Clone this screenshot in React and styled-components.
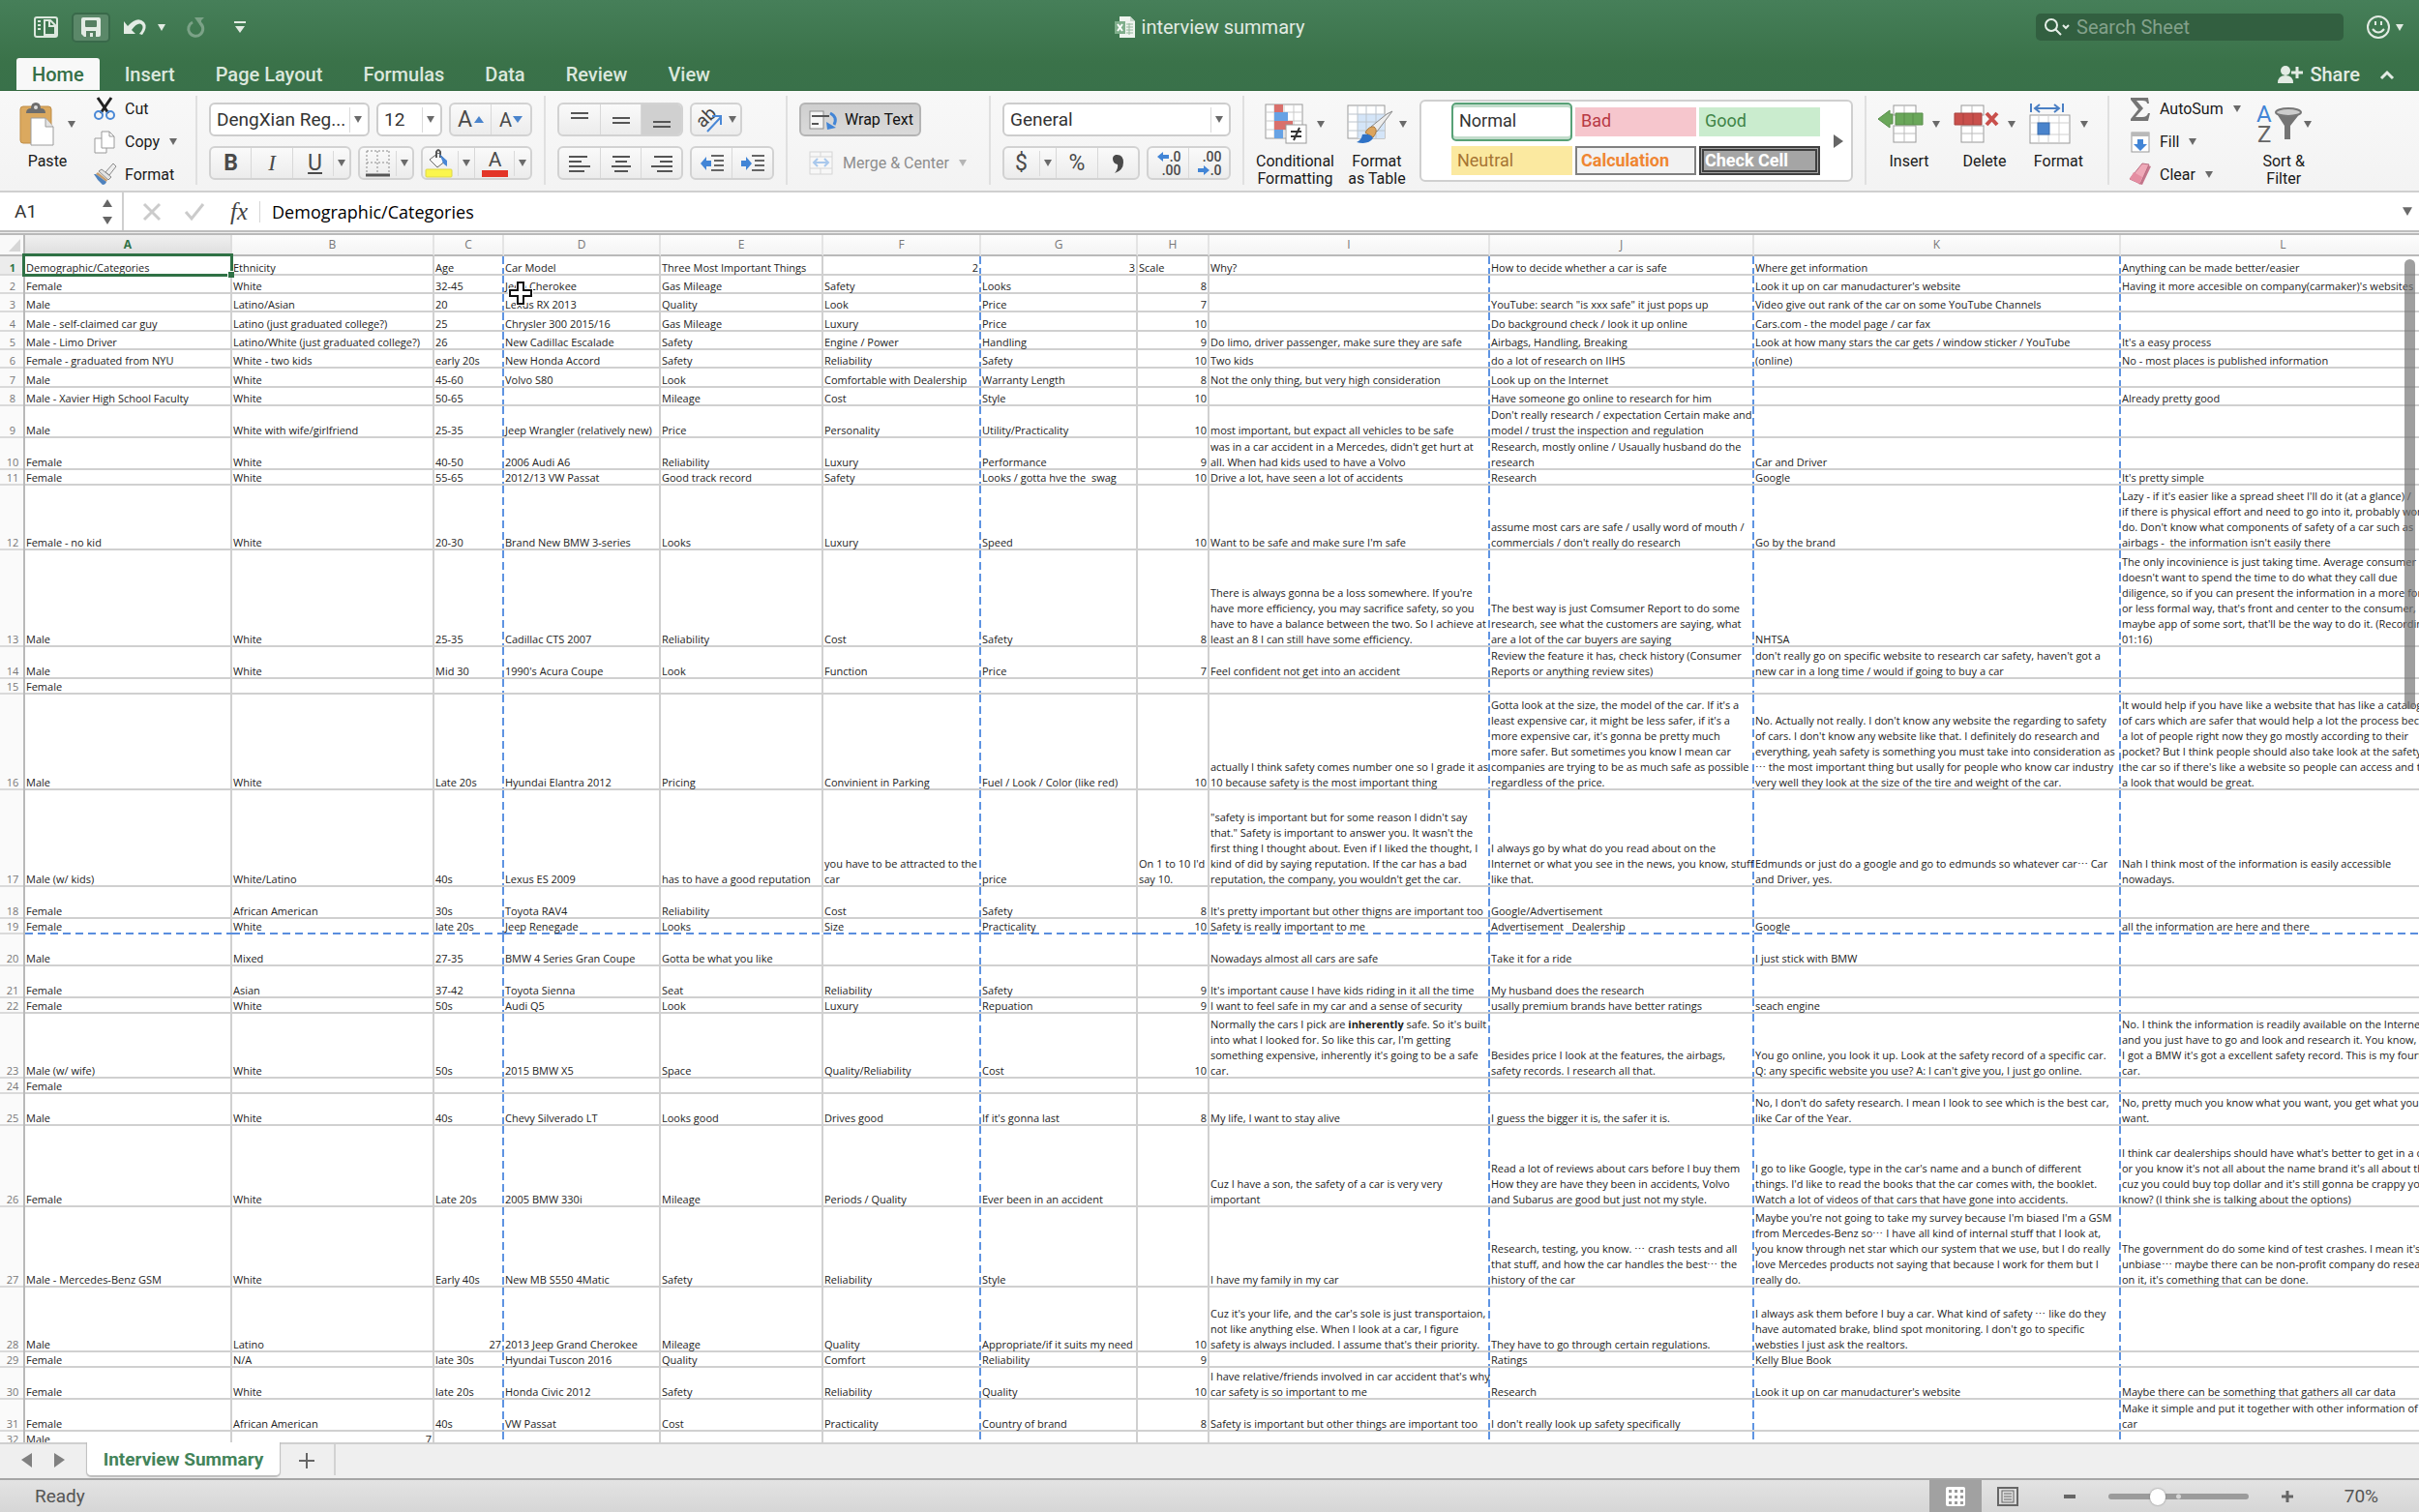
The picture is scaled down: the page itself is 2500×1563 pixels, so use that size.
import React from "react";
import styled, { createGlobalStyle, css } from "styled-components";

const ui = `Roboto, "Liberation Sans", sans-serif`;
const sheetFont = `"Open Sans", "Noto Sans", sans-serif`;

const Global = createGlobalStyle`
  *, *::before, *::after { box-sizing: border-box; }
  body { margin: 0; overflow: hidden; background: #fff; }
  button, input, select { font: inherit; color: inherit; margin: 0; padding: 0; border: 0; background: none; outline: none; }
  svg { display: block; flex: none; overflow: visible; }
`;

const Window = styled.div`
  display: flex;
  flex-direction: column;
  height: 100vh;
  overflow: hidden;
  font-family: ${ui};
  font-size: 16px;
  color: #1a1a1a;
`;

/* ---------- title bar and tabs ---------- */

const Head = styled.header`
  flex: none;
  background: linear-gradient(#467f59, #3a7249 70%, #39714a);
  border-bottom: 1px solid #33683f;
  color: #e3ebe4;
`;
const TitleBar = styled.div`
  display: grid;
  grid-template-columns: 1fr auto 1fr;
  align-items: center;
  height: 60px;
  padding: 0 16px 4px;
`;
const QuickAccess = styled.div`
  display: flex;
  align-items: center;
  gap: 14px;
  padding-left: 19px;
`;
const QuickButton = styled.button`
  display: flex;
  align-items: center;
  gap: 12px;
  ${(p) =>
    p.$boxed &&
    css`
      justify-content: center;
      width: 40px;
      height: 31px;
      border: 2px solid #39694a;
      border-radius: 5px;
      background: #5b8869;
    `}
`;
const Spacer = styled.span`
  width: ${(p) => p.$w}px;
  margin-right: -14px;
`;
const DocTitle = styled.h1`
  display: flex;
  align-items: center;
  gap: 7px;
  margin: 0;
  font-size: 20px;
  font-weight: 400;
  line-height: 24px;
`;
const TitleRight = styled.div`
  display: flex;
  justify-content: flex-end;
  align-items: center;
  gap: 24px;
`;
const Search = styled.label`
  display: flex;
  align-items: center;
  gap: 6px;
  width: 318px;
  height: 28px;
  padding: 0 8px;
  border-radius: 5px;
  background: #325f40;
  input {
    flex: 1;
    min-width: 0;
    font-size: 20px;
  }
  input::placeholder { color: #83a18b; opacity: 1; }
`;
const Smile = styled.button`
  display: flex;
  align-items: center;
  gap: 6px;
`;
const TabRow = styled.div`
  display: flex;
  justify-content: space-between;
  height: 33px;
  padding: 0 25px 0 12px;
`;
const Tabs = styled.nav`
  display: flex;
`;
const Tab = styled.button`
  margin: 0 5px;
  padding: 0 16px;
  border-radius: 3px 3px 0 0;
  font-size: 20px;
  font-weight: 500;
  color: ${(p) => (p.$active ? "#356f47" : "#dbe7dd")};
  background: ${(p) => (p.$active ? "#f8f8f8" : "none")};
`;
const Share = styled.div`
  display: flex;
  align-items: center;
  gap: 20px;
  font-size: 20px;
  font-weight: 500;
  button {
    display: flex;
    align-items: center;
    gap: 7px;
  }
`;

/* ---------- ribbon ---------- */

const Ribbon = styled.section`
  flex: none;
  display: flex;
  height: 105px;
  border-bottom: 2px solid #cfcfcf;
  background: linear-gradient(#f8f8f8, #f3f3f3);
`;
const Group = styled.div`
  display: flex;
  gap: ${(p) => p.$gap || 0}px;
  padding: 12px 12px 0;
  width: ${(p) => (p.$w ? p.$w + "px" : "auto")};
  flex: none;
`;
const Rule = styled.div`
  flex: none;
  width: 2px;
  height: 92px;
  margin-top: 5px;
  background: #e0e0e0;
`;
const Rows = styled.div`
  display: flex;
  flex-direction: column;
  gap: 10px;
`;
const Row = styled.div`
  display: flex;
  gap: 7px;
`;
const ButtonSet = styled.div`
  display: flex;
  height: 35px;
  border: 2px solid #d2d2d2;
  border-radius: 6px;
  background: linear-gradient(#fafafa, #ececec);
  overflow: hidden;
`;
const Tool = styled.button`
  display: flex;
  align-items: center;
  justify-content: center;
  gap: ${(p) => p.$gap || 0}px;
  width: ${(p) => p.$w}px;
  color: #4a4a4a;
  font-size: 23px;
  line-height: 28px;
  background: ${(p) => (p.$on ? "#d0d0d0" : "none")};
  & + & { border-left: 1px solid #d8d8d8; }
`;
const Combo = styled.label`
  display: flex;
  align-items: center;
  width: ${(p) => p.$w}px;
  height: 35px;
  padding: 0 6px;
  border: 2px solid #cdcdcd;
  border-radius: 6px;
  background: #fff;
  select {
    flex: 1;
    min-width: 0;
    appearance: none;
    font-size: 19px;
    color: #333;
  }
`;
const Split = styled.i`
  width: 1px;
  height: 26px;
  margin: 0 4px 0 ${(p) => p.$before || 0}px;
  background: #dadada;
`;
const DropFace = styled.span`
  display: flex;
  flex: 1;
  align-items: center;
  justify-content: flex-end;
  padding-right: 4px;
`;
const WrapButton = styled.button`
  display: flex;
  align-items: center;
  gap: ${(p) => p.$gap || 7}px;
  width: ${(p) => p.$w}px;
  height: 35px;
  padding-left: 8px;
  border: 2px solid ${(p) => (p.$on ? "#b4b4b4" : "transparent")};
  border-radius: 6px;
  white-space: nowrap;
  background: ${(p) => (p.$on ? "linear-gradient(#cfcfcf, #dadada)" : "none")};
  color: ${(p) => (p.$on ? "#111" : "#8d8d8d")};
`;
const Big = styled.button`
  display: flex;
  flex-direction: column;
  align-items: center;
  gap: 8px;
  height: 88px;
  line-height: 18px;
  color: #1a1a1a;
`;
const BigIcon = styled.span`
  display: flex;
  align-items: center;
  gap: ${(p) => p.$gap || 10}px;
  height: 44px;
`;
const PasteWrap = styled.div`
  padding-left: 8px;
`;
const SmallStack = styled.div`
  display: flex;
  flex-direction: column;
  margin-top: -10px;
`;
const EditStack = styled(SmallStack)`
  padding-left: 10px;
`;
const Small = styled.button`
  display: flex;
  align-items: center;
  gap: 10px;
  height: 34px;
  color: #1a1a1a;
`;
const Gallery = styled.div`
  display: flex;
  width: 448px;
  height: 85px;
  margin-top: -3px;
  border: 2px solid #cfcfcf;
  border-radius: 6px;
  background: #fff;
`;
const Swatches = styled.div`
  display: grid;
  grid-template-columns: repeat(3, 125px);
  grid-template-rows: 39px 30px;
  gap: 6px 3px;
  align-items: center;
  align-content: start;
  padding: 1px 0 0 31px;
`;
const Swatch = styled.button`
  height: 30px;
  padding: 0 0 1px 6px;
  text-align: left;
  font-size: 18px;
  line-height: 26px;
  ${(p) => p.$css}
`;
const More = styled.button`
  display: flex;
  align-items: center;
  padding: 0 0 0 14px;
`;
const SmallA = styled.span`
  font-size: 20px;
`;
const Italic = styled.i`
  font-family: "Liberation Serif", serif;
`;

/* ---------- formula bar ---------- */

const FormulaBar = styled.div`
  flex: none;
  display: flex;
  align-items: center;
  height: 39px;
  background: #fff;
`;
const NameBox = styled.label`
  display: flex;
  align-items: center;
  width: 128px;
  height: 39px;
  padding: 0 10px 0 15px;
  border-right: 2px solid #cfcfcf;
  input {
    flex: 1;
    min-width: 0;
    font-size: 19px;
    color: #333;
  }
`;
const FxButtons = styled.div`
  display: flex;
  align-items: center;
  gap: 24px;
  height: 22px;
  padding: 0 12px 0 20px;
  border-right: 1px solid #d6d6d6;
`;
const FxLabel = styled.i`
  padding-left: 2px;
  font-family: "Liberation Serif", serif;
  font-size: 25px;
  line-height: 22px;
  color: #444;
`;
const FormulaInput = styled.input`
  flex: 1;
  min-width: 0;
  padding-left: 12px;
  font-family: ${sheetFont};
  font-size: 18px;
  line-height: 26px;
  color: #000;
`;
const ExpandButton = styled.button`
  padding: 0 7px;
`;
const BarEdge = styled.div`
  flex: none;
  height: 5px;
  border-top: 2px solid #bdbdbd;
  border-bottom: 2px solid #b9b9b9;
  background: #eee;
`;

/* ---------- sheet ---------- */

const Sheet = styled.main`
  position: relative;
  flex: 1;
  min-height: 0;
  overflow: hidden;
  background: #fff;
`;
const Grid = styled.table`
  table-layout: fixed;
  width: 2529px;
  border-collapse: separate;
  border-spacing: 0;
  font-family: ${sheetFont};
  font-size: 11px;
  line-height: 16px;
  color: #222;
  th, td { padding: 0; }
`;
const line = "#d0d0d0";
const ColHead = styled.th`
  height: 22px;
  font-size: 12px;
  line-height: 20px;
  font-weight: ${(p) => (p.$on ? 700 : 400)};
  color: ${(p) => (p.$on ? "#2f7145" : "#777")};
  background: linear-gradient(${(p) => (p.$on ? "#f0f0f0, #dedede" : "#fdfdfd, #f4f4f4")});
  border-right: 2px solid ${(p) => (p.$on ? "#dedede" : "#e4e4e4")};
  border-bottom: 2px solid #b9b9b9;
`;
const Corner = styled.th`
  height: 22px;
  background: #f9f9f9;
  border-right: 2px solid #b9b9b9;
  border-bottom: 2px solid #b9b9b9;
  svg { margin-left: 9px; }
`;
const RowHead = styled.th`
  vertical-align: bottom;
  font-weight: ${(p) => (p.$on ? 700 : 400)};
  color: ${(p) => (p.$on ? "#2f7145" : "#777")};
  background:
    linear-gradient(#b9b9b9, #b9b9b9) 100% 0 / 2px 100% no-repeat,
    linear-gradient(#dadada, #dadada) 0 100% / 100% 2px no-repeat,
    ${(p) => (p.$on ? "#ececec" : "#fafafa")};
`;
const blueV = "repeating-linear-gradient(#5f94e2 0 8px, #fff 8px 12px)";
const blueH = "repeating-linear-gradient(90deg, #5a8ede 0 8px, #fff 8px 13px)";
const Cell = styled.td`
  position: ${(p) => (p.$selected ? "relative" : "static")};
  vertical-align: bottom;
  text-align: ${(p) => (p.$num ? "right" : "left")};
  background:
    ${(p) => (p.$breakBelow ? blueH : `linear-gradient(${line}, ${line})`)} 0 100% / 100% 2px no-repeat,
    ${(p) => (p.$break ? blueV : `linear-gradient(${line}, ${line})`)} 100% 0 / 2px 100% no-repeat;
`;
const Text = styled.div`
  white-space: pre;
  padding: 0 3px 0 1px;
`;
const Selection = styled.div`
  position: absolute;
  inset: -3px -1px -1px -3px;
  border: 3px solid #2f7145;
  &::after {
    content: "";
    position: absolute;
    right: -4px;
    bottom: -4px;
    width: 7px;
    height: 7px;
    border: solid #fff;
    border-width: 1px 0 0 1px;
    background: #2f7145;
  }
`;
const ScrollThumb = styled.div`
  position: absolute;
  top: 25px;
  right: 4px;
  width: 11px;
  height: 465px;
  border-radius: 6px;
  background: rgba(118, 118, 118, 0.7);
`;
const Pointer = styled.div`
  position: absolute;
  left: 525px;
  top: 46px;
`;

/* ---------- bottom ---------- */

const SheetBar = styled.div`
  flex: none;
  display: flex;
  height: 39px;
  padding-left: 22px;
  border-bottom: 2px solid #a5a5a5;
  background: #efefef;
  box-shadow: inset 0 2px 0 #cfcfcf;
`;
const Arrows = styled.div`
  display: flex;
  align-items: center;
  gap: 23px;
  width: 68px;
`;
const SheetTab = styled.button`
  width: 199px;
  height: 34px;
  border-radius: 0 0 4px 4px;
  background: #fff;
  box-shadow: 0 1px 1px 1px #bdbdbd;
  clip-path: inset(0 -3px -3px -3px);
  font-size: 19px;
  font-weight: 700;
  color: #43845a;
`;
const AddSheet = styled.button`
  display: flex;
  align-items: center;
  justify-content: center;
  width: 58px;
  height: 32px;
  margin-top: 2px;
  padding-top: 2px;
  border-right: 2px solid #d2d2d2;
`;
const Status = styled.footer`
  flex: none;
  display: flex;
  align-items: center;
  height: 33px;
  padding: 0 42px 0 36px;
  background: linear-gradient(#e3e3e3, #d6d6d6);
  color: #555;
  font-size: 19px;
`;
const ReadyText = styled.span`
  flex: 1;
`;
const ViewButton = styled.button`
  display: flex;
  align-items: center;
  justify-content: center;
  width: 54px;
  height: 33px;
  background: ${(p) => (p.$on ? "#a1a1a1" : "none")};
`;
const ZoomBar = styled.div`
  display: flex;
  align-items: center;
  gap: 34px;
  margin-left: 31px;
`;
const Slider = styled.input`
  appearance: none;
  display: block;
  width: 145px;
  height: 18px;
  &::-webkit-slider-runnable-track {
    height: 6px;
    border-radius: 3px;
    background: radial-gradient(circle at 50% 50%, #d6d6d6 0 2px, #9b9b9b 3px);
  }
  &::-webkit-slider-thumb {
    appearance: none;
    width: 16px;
    height: 17px;
    margin-top: -5px;
    border-radius: 8px;
    background: #fff;
    box-shadow: 0 0 2px #777;
  }
`;
const Percent = styled.output`
  margin-left: 19px;
`;

/* ---------- icons ---------- */

const Down = ({ c = "#6a6a6a", w = 8 }) => (
  <svg width={w} height={w - 1} viewBox="0 0 8 7"><path d="M0 0h8L4 7z" fill={c} /></svg>
);
const Svg = ({ w, h, children, ...rest }) => (
  <svg width={w} height={h} viewBox={`0 0 ${w} ${h}`} fill="none" {...rest}>{children}</svg>
);
const Lines = ({ d }) => (
  <Svg w={24} h={18} stroke="#555" strokeWidth="2"><path d={d} /></Svg>
);
const PaneIcon = () => (
  <Svg w={25} h={22}>
    <rect x="1" y="1" width="23" height="20" rx="2" stroke="#dce8de" strokeWidth="2" />
    <path d="M4 5h3M4 9h3M4 13h3" stroke="#dce8de" strokeWidth="2" />
    <path d="M11 4h6l5 5v10H11z" fill="#3f7650" stroke="#dce8de" strokeWidth="2" />
    <path d="M16 4v6h6" stroke="#dce8de" strokeWidth="2" />
  </Svg>
);
const SaveIcon = () => (
  <Svg w={22} h={22}>
    <path d="M1 3q0-2 2-2h16q2 0 2 2v16q0 2-2 2H4l-3-3z" fill="#e3ebe4" />
    <rect x="5" y="4" width="12" height="7" rx="1" fill="#567f62" />
    <path d="M6 21v-6h10v6h-3v-4h-3v4z" fill="#567f62" />
  </Svg>
);
const UndoIcon = () => (
  <Svg w={23} h={17}>
    <path d="M0 2v13h12L8 11q6-8 10-6 4 3-2 10l3 1q6-8 2-13-7-7-17 4z" fill="#e3ebe4" />
  </Svg>
);
const RedoIcon = () => (
  <Svg w={19} h={20}>
    <path d="M6 5a7.500 7.500 0 1 0 8 1" stroke="#7ba287" strokeWidth="3" />
    <path d="M8 0h10l-3 3v7z" fill="#7ba287" />
  </Svg>
);
const CustomizeIcon = () => (
  <Svg w={12} h={12}><path d="M0 0h12v2H0zM1 5h10l-5 7z" fill="#e3ebe4" /></Svg>
);
const DocIcon = () => (
  <Svg w={21} h={22}>
    <path d="M5 0h11l5 5v17H5z" fill="#eef3ee" />
    <path d="M16 0v5h5" fill="#c7d6ca" />
    <path d="M12 8h7M12 11h7M12 14h7M12 17h7M15 7v12" stroke="#94b89c" />
    <rect y="5" width="11" height="13" fill="#7fae8b" />
    <path d="M3 8l5 7M8 8l-5 7" stroke="#fff" strokeWidth="2" />
  </Svg>
);
const SearchIcon = () => (
  <Svg w={28} h={20} stroke="#e6efe8" strokeWidth="2">
    <circle cx="8" cy="8" r="6" /><path d="M12 12l6 6M20 8l3 3 3-3" />
  </Svg>
);
const SmileIcon = () => (
  <Svg w={24} h={24} stroke="#e3ebe4" strokeWidth="2">
    <circle cx="12" cy="12" r="11" /><path d="M6 14q6 7 12 0M9 6v4M15 6v4" />
  </Svg>
);
const ShareIcon = () => (
  <Svg w={26} h={20}>
    <circle cx="8" cy="6" r="5" fill="#e3ebe4" />
    <path d="M0 19q0-8 8-8t8 8z" fill="#e3ebe4" />
    <path d="M20 2v12M14 8h12" stroke="#e3ebe4" strokeWidth="3" />
  </Svg>
);
const PasteIcon = () => (
  <Svg w={36} h={44}>
    <rect x="1" y="4" width="32" height="38" rx="3" fill="#dba95f" stroke="#bf8d47" />
    <path d="M7 11q0-5 5-5 0-6 5-6t5 6q5 0 5 5z" fill="#6d6d6d" />
    <circle cx="17" cy="5" r="2" fill="#ddd" />
    <path d="M12 16h15l8 9v19H12z" fill="#fff" stroke="#9c9c9c" />
    <path d="M27 16v9h8" fill="#e3e3e3" stroke="#9c9c9c" />
  </Svg>
);
const CutIcon = () => (
  <Svg w={22} h={25}>
    <path d="M4 1l11 16M18 1L7 17" stroke="#222" strokeWidth="3" />
    <circle cx="5" cy="19" r="4" stroke="#4a88d6" strokeWidth="2" />
    <circle cx="17" cy="19" r="4" stroke="#4a88d6" strokeWidth="2" />
  </Svg>
);
const CopyIcon = () => (
  <Svg w={22} h={24}>
    <path d="M1 8h8l4 4v11H1z" fill="#fff" stroke="#9a9a9a" />
    <path d="M8 1h8l5 5v12H8z" fill="#fff" stroke="#9a9a9a" />
    <path d="M16 1v5h5" stroke="#9a9a9a" />
  </Svg>
);
const BrushIcon = () => (
  <Svg w={22} h={22}>
    <path d="M20 0l3 3-7 9-4-3z" fill="#eee" stroke="#8a8a8a" />
    <path d="M8 6l10 8-3 3L5 8z" fill="#e4e4e4" stroke="#8a8a8a" />
    <path d="M4 9l10 8-1 2L2 11z" fill="#c79d6c" />
    <path d="M2 11l11 8q-1 3-4 3Q4 18 0 11z" fill="#4f82bd" />
  </Svg>
);
const BorderIcon = () => (
  <Svg w={25} h={28} stroke="#8a8a8a" strokeDasharray="2 2">
    <path d="M1 1h23M1 13h23M1 1v23M12 1v23M24 1v23" />
    <path d="M0 26h25" stroke="#555" strokeWidth="3" strokeDasharray="none" />
  </Svg>
);
const FillIcon = () => (
  <Svg w={27} h={29}>
    <path d="M4 11l9-7 8 8-9 7z" fill="#fafafa" stroke="#666" />
    <path d="M11 9V3q2-4 4 0v6" stroke="#555" strokeWidth="2" />
    <path d="M14 5l8 7v6q-5-3-5-6z" fill="#4a88d6" />
    <rect y="21" width="27" height="8" rx="1" fill="#fbf64b" stroke="#dcd64a" />
  </Svg>
);
const ColorBox = styled.span`
  display: flex;
  flex-direction: column;
  align-items: center;
  width: 27px;
  font-size: 21px;
  line-height: 20px;
  &::after {
    content: "";
    width: 27px;
    height: 7px;
    margin-top: 1px;
    background: #e33528;
  }
`;
const OrientIcon = () => (
  <Svg w={28} h={28}>
    <text x="2" y="20" transform="rotate(-45 8 16)" fontFamily="Roboto" fontSize="19" fill="#444">ab</text>
    <path d="M11 26L25 11M25 19v-9h-9" stroke="#4a88d6" strokeWidth="2" />
  </Svg>
);
const IndentIcon = ({ right }) => (
  <Svg w={26} h={18}>
    <path d="M12 1h13M15 6h10M15 11h10M12 16h13" stroke="#666" strokeWidth="2" />
    {right
      ? <path d="M12 9L6 2v4H1v6h5v4z" fill="#4285d6" />
      : <path d="M1 9l6-7v4h5v6H7v4z" fill="#4285d6" />}
  </Svg>
);
const WrapIcon = () => (
  <Svg w={30} h={22}>
    <rect x="1" y="2" width="14" height="18" fill="#f6f6f6" stroke="#8b8b8b" />
    <path d="M3 7h18M3 15h7" stroke="#555" strokeWidth="2" />
    <path d="M22 4q8 4 4 12" stroke="#4285d6" strokeWidth="3" />
    <path d="M18 13l1 8 9-2z" fill="#4285d6" />
  </Svg>
);
const MergeIcon = () => (
  <Svg w={25} h={25}>
    <rect x="1" y="1" width="23" height="23" fill="#f7f7f7" stroke="#d5d5d5" />
    <path d="M1 6h23M1 18h23M12 1v5M12 18v6" stroke="#d5d5d5" />
    <path d="M5 12h15M9 8l-4 4 4 4M16 8l4 4-4 4" stroke="#a9c8ec" strokeWidth="2" />
  </Svg>
);
const DecText = styled.span`
  display: grid;
  justify-items: end;
  width: 26px;
  font-size: 14px;
  font-weight: 500;
  line-height: 14px;
  span { display: flex; align-items: center; gap: 1px; }
`;
const LeftArrow = () => (
  <Svg w={12} h={9}><path d="M0 5l6-5v3h6v4H6v3z" fill="#4285d6" /></Svg>
);
const RightArrow = () => (
  <Svg w={12} h={9}><path d="M12 5L6 0v3H0v4h6v3z" fill="#4285d6" /></Svg>
);
const CondIcon = () => (
  <Svg w={44} h={42}>
    <rect x="1" y="1" width="38" height="35" fill="#fff" stroke="#9a9a9a" />
    <path d="M10 1v35M20 1v35M30 1v35M1 9h38M1 18h38M1 27h38" stroke="#c9c9c9" />
    <path d="M10 1h9v8h-9zM10 18h19v9H10z" fill="#d9706c" />
    <path d="M10 9h14v9H10zM10 27h9v9h-9z" fill="#67a2e4" />
    <rect x="22" y="22" width="21" height="19" fill="#fff" stroke="#9a9a9a" />
    <path d="M27 29h11M27 34h11M36 25l-6 13" stroke="#333" strokeWidth="2" />
  </Svg>
);
const TableIcon = () => (
  <Svg w={48} h={42}>
    <rect x="1" y="2" width="38" height="34" fill="#fff" stroke="#9a9a9a" />
    <path d="M11 11h28v25H11z" fill="#d4e5f8" />
    <path d="M11 2v34M20 2v34M30 2v34M1 11h38M1 19h38M1 28h38" stroke="#bcc4cc" />
    <path d="M47 8L31 29l-6-5L41 11z" fill="#ececec" stroke="#888" />
    <path d="M19 30q4-7 9-6 5 4-1 11z" fill="#dca45c" stroke="#a9783c" />
    <path d="M10 40q5-2 6-8 9-1 11 4-5 7-17 4z" fill="#2f72c6" />
  </Svg>
);
const CellsBase = () => (
  <>
    <rect x="16" y="1" width="23" height="10" fill="#fff" stroke="#999" />
    <rect x="16" y="22" width="23" height="17" fill="#fff" stroke="#999" />
    <path d="M27 1v10M27 22v17M16 30h23" stroke="#bbb" />
  </>
);
const InsertIcon = () => (
  <Svg w={46} h={40}>
    <CellsBase />
    <path d="M18 9h28v12H18z" fill="#6aa75a" stroke="#5a8e4c" />
    <path d="M27 9v12M36 9v12" stroke="#5a8e4c" />
    <path d="M0 15L12 6v4h3v10h-3v4z" fill="#6aa75a" stroke="#5a8e4c" />
  </Svg>
);
const DeleteIcon = () => (
  <Svg w={46} h={40}>
    <g transform="translate(-8 0)"><CellsBase /></g>
    <path d="M1 9h28v12H1z" fill="#c9504c" stroke="#a8423f" />
    <path d="M10 9v12M20 9v12" stroke="#a8423f" />
    <path d="M34 9l11 12M45 9L34 21" stroke="#c9504c" strokeWidth="4" />
  </Svg>
);
const FormatIcon = () => (
  <Svg w={43} h={42}>
    <path d="M2 0v9M35 0v9M7 5h23M11 1L6 5l5 4M26 1l5 4-5 4" stroke="#4a7fc4" strokeWidth="2" />
    <rect x="1" y="12" width="41" height="29" fill="#fff" stroke="#999" />
    <path d="M10 12v29M20 12v29M31 12v29M1 20h41M1 32h41" stroke="#cfcfcf" />
    <rect x="9" y="20" width="12" height="12" fill="#4a84cc" stroke="#3b6fb0" />
  </Svg>
);
const SigmaIcon = () => (
  <Svg w={20} h={24}>
    <path d="M0 0h18l1 6h-2q0-3-5-3H6l7 8-8 9h7q5 0 6-4h2l-2 8H0v-2l8-10L0 2z" fill="#757575" />
  </Svg>
);
const FillDownIcon = () => (
  <Svg w={20} h={22}>
    <rect x="1" y="1" width="18" height="20" fill="#fff" stroke="#999" />
    <path d="M1 1h18v4H1z" fill="#b9b9b9" />
    <path d="M7 8h6v5h4l-7 7-7-7h4z" fill="#4285d6" />
  </Svg>
);
const EraserIcon = () => (
  <Svg w={20} h={24}>
    <path d="M12 1l9 3-9 19-4-1z" fill="#c5768c" />
    <path d="M12 1l7 1-9 20-11-5z" fill="#efa9b8" stroke="#b96e82" />
    <path d="M-1 17l10 5 3-7-9-5z" fill="#e58ea2" />
  </Svg>
);
const SortIcon = () => (
  <Svg w={47} h={40}>
    <text x="0" y="18" fontFamily="Roboto" fontSize="24" fill="#4285d6">A</text>
    <text x="1" y="39" fontFamily="Roboto" fontSize="24" fill="#666">Z</text>
    <path d="M20 8q13 7 26 0L35 22v14h-6V22z" fill="#747474" />
    <ellipse cx="33" cy="8" rx="13" ry="4" fill="#ccc" stroke="#777" strokeWidth="2" />
  </Svg>
);

/* ---------- sheet data ---------- */

const columns = [
  ["A", 214], ["B", 209], ["C", 72, true], ["D", 162], ["E", 168], ["F", 163, true],
  ["G", 162], ["H", 74], ["I", 290, true], ["J", 273, true], ["K", 379, true], ["L", 337],
];

const inherently = (
  <>Normally the cars I pick are <b>inherently</b>{" safe. So it's built\ninto what I looked for. So like this car, I'm getting\nsomething expensive, inherently it's going to be a safe\ncar."}</>
);

const rows = [
  [20, "Demographic/Categories", "Ethnicity", "Age", "Car Model", "Three Most Important Things", 2, 3, "Scale", "Why?", "How to decide whether a car is safe", "Where get information", "Anything can be made better/easier"],
  [19, "Female", "White", "32-45", "Jeep Cherokee", "Gas Mileage", "Safety", "Looks", 8, "", "", "Look it up on car manudacturer's website", "Having it more accesible on company(carmaker)'s websites"],
  [19, "Male", "Latino/Asian", "20", "Lexus RX 2013", "Quality", "Look", "Price", 7, "", "YouTube: search \"is xxx safe\" it just pops up", "Video give out rank of the car on some YouTube Channels", ""],
  [20, "Male - self-claimed car guy", "Latino (just graduated college?)", "25", "Chrysler 300 2015/16", "Gas Mileage", "Luxury", "Price", 10, "", "Do background check / look it up online", "Cars.com - the model page / car fax", ""],
  [19, "Male - Limo Driver", "Latino/White (just graduated college?)", "26", "New Cadillac Escalade", "Safety", "Engine / Power", "Handling", 9, "Do limo, driver passenger, make sure they are safe", "Airbags, Handling, Breaking", "Look at how many stars the car gets / window sticker / YouTube", "It's a easy process"],
  [19, "Female - graduated from NYU", "White - two kids", "early 20s", "New Honda Accord", "Safety", "Reliability", "Safety", 10, "Two kids", "do a lot of research on IIHS", "(online)", "No - most places is published information"],
  [20, "Male", "White", "45-60", "Volvo S80", "Look", "Comfortable with Dealership", "Warranty Length", 8, "Not the only thing, but very high consideration", "Look up on the Internet", "", ""],
  [19, "Male - Xavier High School Faculty", "White", "50-65", "", "Mileage", "Cost", "Style", 10, "", "Have someone go online to research for him", "", "Already pretty good"],
  [33, "Male", "White with wife/girlfriend", "25-35", "Jeep Wrangler (relatively new)", "Price", "Personality", "Utility/Practicality", 10, "most important, but expact all vehicles to be safe", "Don't really research / expectation Certain make and\nmodel / trust the inspection and regulation", "", ""],
  [33, "Female", "White", "40-50", "2006 Audi A6", "Reliability", "Luxury", "Performance", 9, "was in a car accident in a Mercedes, didn't get hurt at\nall. When had kids used to have a Volvo", "Research, mostly online / Usaually husband do the\nresearch", "Car and Driver", ""],
  [16, "Female", "White", "55-65", "2012/13 VW Passat", "Good track record", "Safety", "Looks / gotta hve the  swag", 10, "Drive a lot, have seen a lot of accidents", "Research", "Google", "It's pretty simple"],
  [67, "Female - no kid", "White", "20-30", "Brand New BMW 3-series", "Looks", "Luxury", "Speed", 10, "Want to be safe and make sure I'm safe", "assume most cars are safe / usally word of mouth /\ncommercials / don't really do research", "Go by the brand", "Lazy - if it's easier like a spread sheet I'll do it (at a glance) /\nif there is physical effort and need to go into it, probably won't\ndo. Don't know what components of safety of a car such as\nairbags -  the information isn't easily there"],
  [100, "Male", "White", "25-35", "Cadillac CTS 2007", "Reliability", "Cost", "Safety", 8, "There is always gonna be a loss somewhere. If you're\nhave more efficiency, you may sacrifice safety, so you\nhave to have a balance between the two. So I achieve at\nleast an 8 I can still have some efficiency.", "The best way is just Comsumer Report to do some\nresearch, see what the customers are saying, what\nare a lot of the car buyers are saying", "NHTSA", "The only incovinience is just taking time. Average consumer\ndoesn't want to spend the time to do what they call due\ndiligence, so if you can present the information in a more formal\nor less formal way, that's front and center to the consumer,\nmaybe app of some sort, that'll be the way to do it. (Recording\n01:16)"],
  [33, "Male", "White", "Mid 30", "1990's Acura Coupe", "Look", "Function", "Price", 7, "Feel confident not get into an accident", "Review the feature it has, check history (Consumer\nReports or anything review sites)", "don't really go on specific website to research car safety, haven't got a\nnew car in a long time / would if going to buy a car", ""],
  [16, "Female", "", "", "", "", "", "", "", "", "", "", ""],
  [99, "Male", "White", "Late 20s", "Hyundai Elantra 2012", "Pricing", "Convinient in Parking", "Fuel / Look / Color (like red)", 10, "actually I think safety comes number one so I grade it as\n10 because safety is the most important thing", "Gotta look at the size, the model of the car. If it's a\nleast expensive car, it might be less safer, if it's a\nmore expensive car, it's gonna be pretty much\nmore safer. But sometimes you know I mean car\ncompanies are trying to be as much safe as possible\nregardless of the price.", "No. Actually not really. I don't know any website the regarding to safety\nof cars. I don't know any website like that. I definitely do research and\neverything, yeah safety is something you must take into consideration as\n⋯ the most important thing but usally for people who know car industry\nvery well they look at the size of the tire and weight of the car.", "It would help if you have like a website that has like a catalog\nof cars which are safer that would help a lot the process because\na lot of people right now they go mostly according to their\npocket? But I think people should also take look at the safety of\nthe car so if there's like a website so people can access and take\na look that would be great."],
  [100, "Male (w/ kids)", "White/Latino", "40s", "Lexus ES 2009", "has to have a good reputation", "you have to be attracted to the\ncar", "price", "On 1 to 10 I'd\nsay 10.", "\"safety is important but for some reason I didn't say\nthat.\" Safety is important to answer you. It wasn't the\nfirst thing I thought about. Even if I liked the thought, I\nkind of did by saying reputation. If the car has a bad\nreputation, the company, you wouldn't get the car.", "I always go by what do you read about on the\nInternet or what you see in the news, you know, stuff\nlike that.", "Edmunds or just do a google and go to edmunds so whatever car⋯ Car\nand Driver, yes.", "Nah I think most of the information is easily accessible\nnowadays."],
  [33, "Female", "African American", "30s", "Toyota RAV4", "Reliability", "Cost", "Safety", 8, "It's pretty important but other thigns are important too", "Google/Advertisement", "", ""],
  [16, "Female", "White", "late 20s", "Jeep Renegade", "Looks", "Size", "Practicality", 10, "Safety is really important to me", "Advertisement   Dealership", "Google", "all the information are here and there"],
  [33, "Male", "Mixed", "27-35", "BMW 4 Series Gran Coupe", "Gotta be what you like", "", "", "", "Nowadays almost all cars are safe", "Take it for a ride", "I just stick with BMW", ""],
  [33, "Female", "Asian", "37-42", "Toyota Sienna", "Seat", "Reliability", "Safety", 9, "It's important cause I have kids riding in it all the time", "My husband does the research", "", ""],
  [16, "Female", "White", "50s", "Audi Q5", "Look", "Luxury", "Repuation", 9, "I want to feel safe in my car and a sense of security", "usally premium brands have better ratings", "seach engine", ""],
  [67, "Male (w/ wife)", "White", "50s", "2015 BMW X5", "Space", "Quality/Reliability", "Cost", 10, inherently, "Besides price I look at the features, the airbags,\nsafety records. I research all that.", "You go online, you look it up. Look at the safety record of a specific car.\nQ: any specific website you use? A: I can't give you, I just go online.", "No. I think the information is readily available on the Internet\nand you just have to go and look and research it. You know,\nI got a BMW it's got a excellent safety record. This is my fourth\ncar."],
  [16, "Female", "", "", "", "", "", "", "", "", "", "", ""],
  [33, "Male", "White", "40s", "Chevy Silverado LT", "Looks good", "Drives good", "If it's gonna last", 8, "My life, I want to stay alive", "I guess the bigger it is, the safer it is.", "No, I don't do safety research. I mean I look to see which is the best car,\nlike Car of the Year.", "No, pretty much you know what you want, you get what you\nwant."],
  [84, "Female", "White", "Late 20s", "2005 BMW 330i", "Mileage", "Periods / Quality", "Ever been in an accident", "", "Cuz I have a son, the safety of a car is very very\nimportant", "Read a lot of reviews about cars before I buy them\nHow they are have they been in accidents, Volvo\nand Subarus are good but just not my style.", "I go to like Google, type in the car's name and a bunch of different\nthings. I'd like to read the books that the car comes with, the booklet.\nWatch a lot of videos of that cars that have gone into accidents.", "I think car dealerships should have what's better to get in a car\nor you know it's not all about the name brand it's all about the\ncuz you could buy top dollar and it's still gonna be crappy you\nknow? (I think she is talking about the options)"],
  [83, "Male - Mercedes-Benz GSM", "White", "Early 40s", "New MB S550 4Matic", "Safety", "Reliability", "Style", "", "I have my family in my car", "Research, testing, you know. ⋯ crash tests and all\nthat stuff, and how the car handles the best⋯ the\nhistory of the car", "Maybe you're not going to take my survey because I'm biased I'm a GSM\nfrom Mercedes-Benz so⋯ I have all kind of internal stuff that I look at,\nyou know through net star which our system that we use, but I do really\nlove Mercedes products not saying that because I work for them but I\nreally do.", "The government do do some kind of test crashes. I mean it's\nunbiase⋯ maybe there can be non-profit company do research\non it, it's comething that can be done."],
  [67, "Male", "Latino", 27, "2013 Jeep Grand Cherokee", "Mileage", "Quality", "Appropriate/if it suits my need", 10, "Cuz it's your life, and the car's sole is just transportaion,\nnot like anything else. When I look at a car, I figure\nsafety is always included. I assume that's their priority.", "They have to go through certain regulations.", "I always ask them before I buy a car. What kind of safety ⋯ like do they\nhave automated brake, blind spot monitoring. I don't go to specific\nwebsties I just ask the realtors.", ""],
  [16, "Female", "N/A", "late 30s", "Hyundai Tuscon 2016", "Quality", "Comfort", "Reliability", 9, "", "Ratings", "Kelly Blue Book", ""],
  [33, "Female", "White", "late 20s", "Honda Civic 2012", "Safety", "Reliability", "Quality", 10, "I have relative/friends involved in car accident that's why\ncar safety is so important to me", "Research", "Look it up on car manudacturer's website", "Maybe there can be something that gathers all car data"],
  [33, "Female", "African American", "40s", "VW Passat", "Cost", "Practicality", "Country of brand", 8, "Safety is important but other things are important too", "I don't really look up safety specifically", "", "Make it simple and put it together with other information of\ncar"],
  [16, "Male", 7, "", "", "", "", "", "", "", "", "", ""],
];

const PAGE_BREAK_ROW = 19;

const swatches = [
  ["Normal", css`height: 40px; color: #333; border: 2px solid #58a177; border-radius: 5px; background: #fff; box-shadow: inset 0 3px 0 #c2dccb, inset 0 -3px 0 #c2dccb;`],
  ["Bad", css`background: #f6c6cd; color: #b83a44;`],
  ["Good", css`background: #caecce; color: #3f8446;`],
  ["Neutral", css`background: #fbe9a0; color: #a67433;`],
  ["Calculation", css`background: #f2f2f2; color: #ef8632; font-weight: 700; border: 2px solid #808080; padding-left: 4px;`],
  ["Check Cell", css`background: #a5a5a5; color: #fff; font-weight: 700; border: 5px double #404040; padding: 0 0 0 1px; line-height: 20px;`],
];

export default function App() {
  return (
    <Window>
      <Global />
      <Head>
        <TitleBar>
          <QuickAccess>
            <QuickButton aria-label="Sidebar"><PaneIcon /></QuickButton>
            <QuickButton $boxed aria-label="Save"><SaveIcon /></QuickButton>
            <QuickButton aria-label="Undo"><UndoIcon /><Down c="#e3ebe4" /></QuickButton>
            <Spacer $w={8} />
            <QuickButton aria-label="Redo"><RedoIcon /></QuickButton>
            <Spacer $w={16} />
            <QuickButton aria-label="Customize"><CustomizeIcon /></QuickButton>
          </QuickAccess>
          <DocTitle><DocIcon />interview summary</DocTitle>
          <TitleRight>
            <Search>
              <SearchIcon />
              <input type="search" aria-label="Search Sheet" placeholder="Search Sheet" />
            </Search>
            <Smile aria-label="Feedback"><SmileIcon /><Down c="#e3ebe4" /></Smile>
          </TitleRight>
        </TitleBar>
        <TabRow>
          <Tabs>
            {["Home", "Insert", "Page Layout", "Formulas", "Data", "Review", "View"].map((t, i) => (
              <Tab key={t} $active={i === 0}>{t}</Tab>
            ))}
          </Tabs>
          <Share>
            <button><ShareIcon />Share</button>
            <button aria-label="Collapse ribbon">
              <Svg w={16} h={10} stroke="#e3ebe4" strokeWidth="3"><path d="M2 9l6-6 6 6" /></Svg>
            </button>
          </Share>
        </TabRow>
      </Head>

      <Ribbon>
        <Group $w={202} $gap={19}>
          <PasteWrap>
            <Big><BigIcon $gap={14}><PasteIcon /><Down /></BigIcon>Paste</Big>
          </PasteWrap>
          <SmallStack>
            <Small><CutIcon />Cut</Small>
            <Small><CopyIcon />Copy<Down /></Small>
            <Small><BrushIcon />Format</Small>
          </SmallStack>
        </Group>
        <Rule />
        <Group>
          <Rows>
            <Row>
              <Combo $w={166}>
                <select aria-label="Font"><option>DengXian Reg...</option></select>
                <Split /><Down />
              </Combo>
              <Combo $w={68}>
                <select aria-label="Font size"><option>12</option></select>
                <Split /><Down />
              </Combo>
              <ButtonSet>
                <Tool $w={41} $gap={2} aria-label="Increase font size">A<Svg w={10} h={7}><path d="M0 7l5-7 5 7z" fill="#4a84cc" /></Svg></Tool>
                <Tool $w={41} $gap={1} aria-label="Decrease font size"><SmallA>A</SmallA><Svg w={10} h={7}><path d="M0 0h10L5 7z" fill="#4a84cc" /></Svg></Tool>
              </ButtonSet>
            </Row>
            <Row>
              <ButtonSet>
                <Tool $w={41}><b>B</b></Tool>
                <Tool $w={43}><Italic>I</Italic></Tool>
                <Tool $w={59}><DropFace><u>U</u><Split $before={11} /><Down /></DropFace></Tool>
              </ButtonSet>
              <ButtonSet>
                <Tool $w={54} aria-label="Borders"><DropFace><BorderIcon /><Split $before={6} /><Down /></DropFace></Tool>
              </ButtonSet>
              <ButtonSet>
                <Tool $w={53} aria-label="Fill color"><DropFace><FillIcon /><Split $before={6} /><Down /></DropFace></Tool>
                <Tool $w={58}><DropFace><ColorBox>A</ColorBox><Split $before={6} /><Down /></DropFace></Tool>
              </ButtonSet>
            </Row>
          </Rows>
        </Group>
        <Rule />
        <Group>
          <Rows>
            <Row>
              <ButtonSet>
                <Tool $w={42} aria-label="Top align"><Lines d="M3 2h18M3 7h18" /></Tool>
                <Tool $w={42} aria-label="Middle align"><Lines d="M3 7h18M3 12h18" /></Tool>
                <Tool $w={42} $on aria-label="Bottom align"><Lines d="M3 11h18M3 16h18" /></Tool>
              </ButtonSet>
              <ButtonSet>
                <Tool $w={50} $gap={5} aria-label="Orientation"><OrientIcon /><Down /></Tool>
              </ButtonSet>
            </Row>
            <Row>
              <ButtonSet>
                <Tool $w={42} aria-label="Align left"><Lines d="M1 2h19M1 7h13M1 12h22M1 17h16" /></Tool>
                <Tool $w={42} aria-label="Center"><Lines d="M3 2h18M6 7h12M2 12h20M5 17h14" /></Tool>
                <Tool $w={42} aria-label="Align right"><Lines d="M4 2h19M10 7h13M1 12h22M7 17h16" /></Tool>
              </ButtonSet>
              <ButtonSet>
                <Tool $w={41} aria-label="Decrease indent"><IndentIcon /></Tool>
                <Tool $w={42} aria-label="Increase indent"><IndentIcon right /></Tool>
              </ButtonSet>
            </Row>
          </Rows>
        </Group>
        <Rule />
        <Group $w={208}>
          <Rows>
            <WrapButton $on $w={126}><WrapIcon />Wrap Text</WrapButton>
            <WrapButton $w={184} $gap={10}><MergeIcon />Merge &amp; Center<Down c="#b5b5b5" /></WrapButton>
          </Rows>
        </Group>
        <Rule />
        <Group>
          <Rows>
            <Row>
              <Combo $w={236}>
                <select aria-label="Number format"><option>General</option></select>
                <Split /><Down />
              </Combo>
            </Row>
            <Row>
              <ButtonSet>
                <Tool $w={53}><DropFace>$<Split $before={12} /><Down /></DropFace></Tool>
                <Tool $w={43}>%</Tool>
                <Tool $w={42} aria-label="Comma style"><Svg w={12} h={20}><path d="M3 1q8-1 8 8 0 8-9 11 4-5 3-9Q0 10 0 5q0-3 3-4z" fill="#4a4a4a" /></Svg></Tool>
              </ButtonSet>
              <ButtonSet>
                <Tool $w={41}><DecText><span><LeftArrow />.0</span><span>.00</span></DecText></Tool>
                <Tool $w={42}><DecText><span>.00</span><span><RightArrow />.0</span></DecText></Tool>
              </ButtonSet>
            </Row>
          </Rows>
        </Group>
        <Rule />
        <Group $gap={13}>
          <Big><BigIcon><CondIcon /><Down /></BigIcon><span>Conditional<br />Formatting</span></Big>
          <Big><BigIcon $gap={6}><TableIcon /><Down /></BigIcon><span>Format<br />as Table</span></Big>
          <Gallery>
            <Swatches>
              {swatches.map(([name, style]) => <Swatch key={name} $css={style}>{name}</Swatch>)}
            </Swatches>
            <More aria-label="More styles"><Svg w={10} h={14}><path d="M0 0l10 7-10 7z" fill="#666" /></Svg></More>
          </Gallery>
        </Group>
        <Rule />
        <Group $w={249} $gap={14}>
          <Big><BigIcon><InsertIcon /><Down /></BigIcon>Insert</Big>
          <Big><BigIcon><DeleteIcon /><Down /></BigIcon>Delete</Big>
          <Big><BigIcon><FormatIcon /><Down /></BigIcon>Format</Big>
        </Group>
        <Rule />
        <Group $gap={16}>
          <EditStack>
            <Small><SigmaIcon />AutoSum<Down /></Small>
            <Small><FillDownIcon />Fill<Down /></Small>
            <Small><EraserIcon />Clear<Down /></Small>
          </EditStack>
          <Big><BigIcon $gap={2}><SortIcon /><Down /></BigIcon><span>Sort &amp;<br />Filter</span></Big>
        </Group>
      </Ribbon>

      <FormulaBar>
        <NameBox>
          <input aria-label="Name box" defaultValue="A1" />
          <Svg w={10} h={26}><path d="M0 8l5-8 5 8zM0 18h10l-5 8z" fill="#666" /></Svg>
        </NameBox>
        <FxButtons>
          <button aria-label="Cancel"><Svg w={18} h={18} stroke="#cbcbcb" strokeWidth="3"><path d="M1 1l16 16M17 1L1 17" /></Svg></button>
          <button aria-label="Enter"><Svg w={22} h={18} stroke="#cbcbcb" strokeWidth="3"><path d="M2 9l6 7L20 1" /></Svg></button>
          <FxLabel>fx</FxLabel>
        </FxButtons>
        <FormulaInput aria-label="Formula" defaultValue="Demographic/Categories" />
        <ExpandButton aria-label="Expand formula bar"><Down w={10} /></ExpandButton>
      </FormulaBar>
      <BarEdge />

      <Sheet>
        <Grid>
          <colgroup>
            <col width="26" />
            {columns.map(([c, w]) => <col key={c} width={w} />)}
          </colgroup>
          <thead>
            <tr>
              <Corner aria-label="Select all"><Svg w={12} h={13}><path d="M12 0v13H0z" fill="#d6d6d6" /></Svg></Corner>
              {columns.map(([c]) => <ColHead key={c} scope="col" $on={c === "A"}>{c}</ColHead>)}
            </tr>
          </thead>
          <tbody>
            {rows.map(([h, ...cells], r) => (
              <tr key={r} style={{ height: h }}>
                <RowHead scope="row" $on={r === 0}>{r + 1}</RowHead>
                {cells.map((v, c) => (
                  <Cell
                    key={c}
                    $num={typeof v === "number"}
                    $break={columns[c][2]}
                    $breakBelow={r + 1 === PAGE_BREAK_ROW}
                    $selected={r === 0 && c === 0}
                  >
                    {v !== "" && <Text>{v}</Text>}
                    {r === 0 && c === 0 && <Selection />}
                  </Cell>
                ))}
              </tr>
            ))}
          </tbody>
        </Grid>
        <ScrollThumb />
        <Pointer>
          <Svg w={26} h={28}>
            <path d="M9 2h8v8h8v8h-8v8H9v-8H1v-8h8z" fill="#fff" stroke="#fff" strokeWidth="2" />
            <path d="M10 3h6v8h8v6h-8v8h-6v-8H2v-6h8z" fill="#fff" stroke="#111" strokeWidth="2" />
          </Svg>
        </Pointer>
      </Sheet>

      <SheetBar>
        <Arrows>
          <button aria-label="Previous sheet"><Svg w={11} h={15}><path d="M11 0v15L0 7z" fill="#808080" /></Svg></button>
          <button aria-label="Next sheet"><Svg w={11} h={15}><path d="M0 0v15l11-8z" fill="#808080" /></Svg></button>
        </Arrows>
        <SheetTab>Interview Summary</SheetTab>
        <AddSheet aria-label="New sheet"><Svg w={16} h={16} stroke="#666" strokeWidth="2"><path d="M8 0v16M0 8h16" /></Svg></AddSheet>
      </SheetBar>
      <Status>
        <ReadyText>Ready</ReadyText>
        <ViewButton $on aria-label="Normal view">
          <Svg w={20} h={20}><rect width="20" height="20" rx="2" fill="#fff" /><path d="M3 3h3v3H3zM9 3h3v3H9zM15 3h3v3h-3zM3 9h3v3H3zM9 9h3v3H9zM15 9h3v3h-3zM3 15h3v3H3zM9 15h3v3H9zM15 15h3v3h-3z" fill="#999" /></Svg>
        </ViewButton>
        <ViewButton aria-label="Page layout view">
          <Svg w={22} h={20} stroke="#666"><rect x="1" y="1" width="20" height="18" strokeWidth="2" /><rect x="5" y="4" width="12" height="12" strokeWidth="1" /><path d="M7 7h8M7 10h8M7 13h8" /></Svg>
        </ViewButton>
        <ZoomBar>
          <button aria-label="Zoom out"><Svg w={12} h={4}><path d="M0 0h12v4H0z" fill="#666" /></Svg></button>
          <Slider type="range" aria-label="Zoom" min="10" max="190" defaultValue="70" />
          <button aria-label="Zoom in"><Svg w={12} h={12} stroke="#666" strokeWidth="3"><path d="M6 0v12M0 6h12" /></Svg></button>
          <Percent>70%</Percent>
        </ZoomBar>
      </Status>
    </Window>
  );
}
